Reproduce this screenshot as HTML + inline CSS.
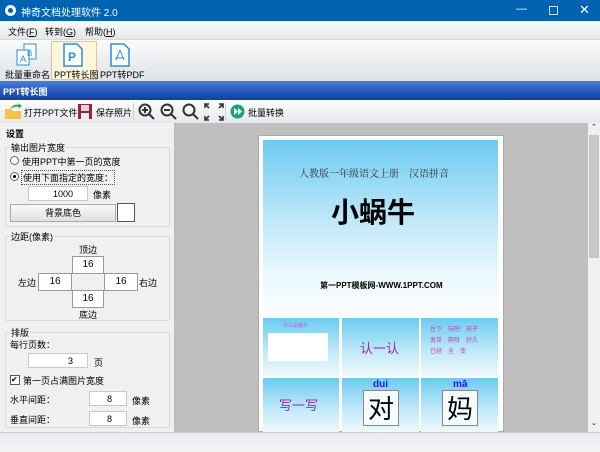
<!DOCTYPE html>
<html><head><meta charset="utf-8"><style>
*{margin:0;padding:0;box-sizing:border-box}
body{width:600px;height:452px;overflow:hidden;font-family:"Liberation Sans","Noto Sans CJK SC",sans-serif;font-size:9px;color:#000;background:#f0f0f0;position:relative}
.a{position:absolute}
.title{left:0;top:0;width:600px;height:21px;background:#0063b1;color:#fff;font-size:10px}
.menu{top:21px;left:0;width:600px;height:19px;background:linear-gradient(#fbfbfb,#e4e6e9);border-bottom:1px solid #d8d8d8}
.tb{top:40px;left:0;width:600px;height:41px;background:linear-gradient(#fafafa,#dfe2e6)}
.hdr{top:81px;left:0;width:600px;height:19px;background:linear-gradient(#4a7fd6,#1d4fb5 70%,#123e9c);color:#fff;font-weight:bold;font-size:9px}
.tb2{top:100px;left:0;width:600px;height:23px;background:linear-gradient(#fdfdfd,#e6e8eb)}
.left{top:123px;left:0;width:175px;height:309px;background:#f0f0f0;border-right:1px solid #bbb}
.grp{border:1px solid #dadada;border-radius:2px}
.inp{background:#fff;border:1px solid #c8c8c8;text-align:right;font-size:9px;line-height:14px;padding-right:14px}
.box{background:#fff;border:1px solid #999;text-align:center;font-size:10px;line-height:16px}
.right{top:123px;left:175px;width:413px;height:309px;background:#bfbfbf}
.sb{top:123px;left:588px;width:12px;height:309px;background:#f0f0f0}
.status{top:432px;left:0;width:600px;height:20px;background:linear-gradient(#e9ebee,#f4f5f6);border-top:1px solid #ccc}
.sky{background:linear-gradient(#6ccbf0,#bfe8f8 45%,#eaf8fd 75%,#fbfeff)}
.sk2{background:linear-gradient(#6ccbf0,#c4eaf9 60%,#eef9fd)}
</style></head><body>
<div class="a title"><div class="a" style="left:5px;top:5px;width:11px;height:11px;border-radius:50%;background:#fff"></div><div class="a" style="left:8px;top:8px;width:5px;height:5px;border-radius:50%;background:#0063b1"></div><span class="a" style="left:21px;top:4px">神奇文档处理软件 2.0</span>
<span class="a" style="left:516px;top:3px;font-size:11px">—</span><div class="a" style="left:549px;top:6px;width:9px;height:9px;border:1.5px solid #cfe0f0"></div><span class="a" style="left:579px;top:2px;font-size:13px">✕</span></div>
<div class="a menu"><span class="a" style="left:8px;top:4px">文件(<u>F</u>)</span><span class="a" style="left:45px;top:4px">转到(<u>G</u>)</span><span class="a" style="left:85px;top:4px">帮助(<u>H</u>)</span></div>
<div class="a tb">
<svg class="a" style="left:15px;top:3px" width="24" height="24"><rect x="9" y="1" width="12" height="15" fill="#fff" stroke="#2a8fe0"/><rect x="2" y="7" width="12" height="15" fill="#fff" stroke="#2a8fe0"/><text x="5" y="19" font-size="9" fill="#2a8fe0">A</text><text x="12" y="13" font-size="8" fill="#2a8fe0">B</text></svg>
<span class="a" style="left:5px;top:28px">批量重命名</span>
<div class="a" style="left:51px;top:1px;width:46px;height:39px;background:#fdf6dc;border:1px solid #d6c9a0"></div>
<svg class="a" style="left:62px;top:3px" width="22" height="24"><path d="M2 1h13l5 5v17H2z" fill="#fff" stroke="#2a8fe0" stroke-width="1.5"/><text x="6" y="18" font-size="12" font-weight="bold" fill="#2a8fe0">P</text></svg>
<span class="a" style="left:54px;top:28px">PPT转长图</span>
<svg class="a" style="left:109px;top:3px" width="22" height="24"><path d="M2 1h13l5 5v17H2z" fill="#fff" stroke="#2a8fe0" stroke-width="1.5"/><path d="M11 7l-4 10M11 7l4 10M6 15l9 0" stroke="#2a8fe0" fill="none"/></svg>
<span class="a" style="left:100px;top:28px">PPT转PDF</span></div>
<div class="a hdr"><span class="a" style="left:3px;top:4px">PPT转长图</span></div>
<div class="a tb2">
<svg class="a" style="left:4px;top:3px" width="18" height="17"><path d="M1 6h6l2 2h8v8H1z" fill="#f5c542"/><path d="M6 6c2-4 6-5 9-4l-1-2 4 3-4 3 1-2c-3-1-6 0-9 2z" fill="#3aa83a"/></svg>
<span class="a" style="left:24px;top:6px">打开PPT文件</span>
<svg class="a" style="left:78px;top:4px" width="14" height="15"><rect width="14" height="15" fill="#8b2846"/><rect x="3" y="1" width="8" height="6" fill="#e8d0da"/><rect x="3" y="9" width="8" height="6" fill="#eee"/></svg>
<span class="a" style="left:96px;top:6px">保存照片</span>
<div class="a" style="left:133px;top:3px;width:1px;height:17px;background:#ccc"></div>
<svg class="a" style="left:138px;top:3px" width="92" height="18" fill="none" stroke="#333" stroke-width="2"><circle cx="7" cy="7" r="5.5"/><path d="M11 11l5 5M4 7h6M7 4v6"/><circle cx="29" cy="7" r="5.5"/><path d="M33 11l5 5M26 7h6"/><circle cx="51" cy="7" r="5.5"/><path d="M55 11l5 5"/><path d="M67 5V1h4M81 1h4v4M67 13v4h4M81 17h4v-4M67 1l4 4M85 1l-4 4M67 17l4-4M85 17l-4-4" stroke-width="1.6"/></svg>
<div class="a" style="left:225px;top:3px;width:1px;height:17px;background:#ccc"></div>
<svg class="a" style="left:230px;top:4px" width="15" height="15"><circle cx="7.5" cy="7.5" r="7" fill="#1aa37a"/><path d="M4 4l4 3.5-4 3.5zM8 4l4 3.5-4 3.5z" fill="#fff"/></svg>
<span class="a" style="left:248px;top:6px">批量转换</span></div>
<div class="a left">
<span class="a" style="left:6px;top:4px;font-weight:bold">设置</span>
<div class="a grp" style="left:5px;top:24px;width:165px;height:80px"></div>
<span class="a" style="left:10px;top:18px;background:#f0f0f0;padding:0 1px">输出图片宽度</span>
<div class="a" style="left:10px;top:33px;width:9px;height:9px;border:1px solid #666;border-radius:50%;background:#fff"></div><span class="a" style="left:22px;top:32px">使用PPT中第一页的宽度</span>
<div class="a" style="left:10px;top:49px;width:9px;height:9px;border:1px solid #666;border-radius:50%;background:#fff"></div><div class="a" style="left:13px;top:52px;width:3px;height:3px;border-radius:50%;background:#000"></div><span class="a" style="left:21px;top:47px;border:1px dotted #555;padding:0 1px">使用下面指定的宽度：</span>
<div class="a inp" style="left:28px;top:63px;width:60px;height:15px">1000</div><span class="a" style="left:93px;top:65px">像素</span>
<div class="a" style="left:10px;top:81px;width:106px;height:18px;border:1px solid #aaa;background:linear-gradient(#fafafa,#e0e0e0);text-align:center;line-height:16px">背景底色</div>
<div class="a" style="left:117px;top:80px;width:18px;height:19px;border:1px solid #555;background:#fff"></div>
<div class="a grp" style="left:5px;top:113px;width:165px;height:85px"></div>
<span class="a" style="left:10px;top:107px;background:#f0f0f0;padding:0 1px">边距(像素)</span>
<span class="a" style="left:79px;top:120px">顶边</span>
<div class="a box" style="left:72px;top:133px;width:32px;height:18px">16</div>
<div class="a box" style="left:38px;top:150px;width:34px;height:18px">16</div>
<div class="a" style="left:71px;top:150px;width:34px;height:18px;border-top:1px solid #999;border-bottom:1px solid #999"></div>
<div class="a box" style="left:104px;top:150px;width:34px;height:18px">16</div>
<div class="a box" style="left:72px;top:167px;width:32px;height:18px">16</div>
<span class="a" style="left:18px;top:153px">左边</span><span class="a" style="left:139px;top:153px">右边</span>
<span class="a" style="left:79px;top:185px">底边</span>
<div class="a grp" style="left:5px;top:209px;width:165px;height:96px"></div>
<span class="a" style="left:10px;top:203px;background:#f0f0f0;padding:0 1px">排版</span>
<span class="a" style="left:10px;top:215px">每行页数：</span>
<div class="a inp" style="left:28px;top:230px;width:60px;height:15px">3</div><span class="a" style="left:94px;top:233px">页</span>
<div class="a" style="left:10px;top:252px;width:10px;height:10px;border:1px solid #555;background:#fff;font-size:8px;line-height:8px">✔</div><span class="a" style="left:23px;top:251px">第一页占满图片宽度</span>
<span class="a" style="left:10px;top:270px">水平间距：</span>
<div class="a inp" style="left:89px;top:268px;width:38px;height:15px">8</div><span class="a" style="left:132px;top:271px">像素</span>
<span class="a" style="left:10px;top:290px">垂直间距：</span>
<div class="a inp" style="left:89px;top:288px;width:38px;height:15px">8</div><span class="a" style="left:132px;top:291px">像素</span>
</div>
<div class="a right">
<div class="a" style="left:83px;top:12px;width:246px;height:297px;background:#fff;border:1px solid #aaa"></div>
<div class="a sky" style="left:88px;top:17px;width:235px;height:178px"></div>
<span class="a" style="left:124px;top:42px;font-family:'Noto Serif CJK SC',serif;font-size:10px;color:#333">人教版一年级语文上册　汉语拼音</span>
<span class="a" style="left:156px;top:68px;font-size:28px;font-weight:bold">小蜗牛</span>
<span class="a" style="left:145px;top:157px;font-size:8px;font-weight:bold">第一PPT模板网-WWW.1PPT.COM</span>
<div class="a sk2" style="left:88px;top:195px;width:76px;height:58px"></div>
<div class="a" style="left:93px;top:210px;width:60px;height:28px;background:#fff"></div>
<span class="a" style="left:108px;top:199px;font-size:5px;color:#d050c0">什么是蜗牛</span>
<div class="a sk2" style="left:167px;top:195px;width:77px;height:58px"></div>
<span class="a" style="left:185px;top:215px;font-size:13px;color:#9a2a9a">认一认</span>
<div class="a sk2" style="left:246px;top:195px;width:77px;height:58px"></div>
<span class="a" style="left:255px;top:202px;font-size:6px;color:#c040c0;line-height:11px">住下　玩吧　孩子<br>发芽　爬呀　好久<br>已经　全　变</span>
<div class="a sk2" style="left:88px;top:255px;width:76px;height:54px"></div>
<span class="a" style="left:104px;top:272px;font-size:13px;color:#9a2a9a">写一写</span>
<div class="a sk2" style="left:167px;top:255px;width:77px;height:54px"></div>
<span class="a" style="left:198px;top:256px;font-size:10px;font-weight:bold;color:#1a1ae0">dui</span>
<div class="a" style="left:188px;top:267px;width:36px;height:36px;border:1px solid #888;background:#f4fbfe;font-size:26px;text-align:center;line-height:34px;font-family:'Noto Sans CJK SC',sans-serif">对</div>
<div class="a sk2" style="left:246px;top:255px;width:77px;height:54px"></div>
<span class="a" style="left:278px;top:256px;font-size:10px;font-weight:bold;color:#1a1ae0">mā</span>
<div class="a" style="left:267px;top:267px;width:36px;height:36px;border:1px solid #888;background:#f4fbfe;font-size:26px;text-align:center;line-height:34px;font-family:'Noto Sans CJK SC',sans-serif">妈</div>
</div>
<div class="a sb"><div class="a" style="left:1px;top:12px;width:10px;height:123px;background:#c8c8c8"></div><span class="a" style="left:3px;top:0px;font-size:7px">⌃</span><span class="a" style="left:3px;top:296px;font-size:7px">⌄</span></div>
<div class="a status"></div>
</body></html>
